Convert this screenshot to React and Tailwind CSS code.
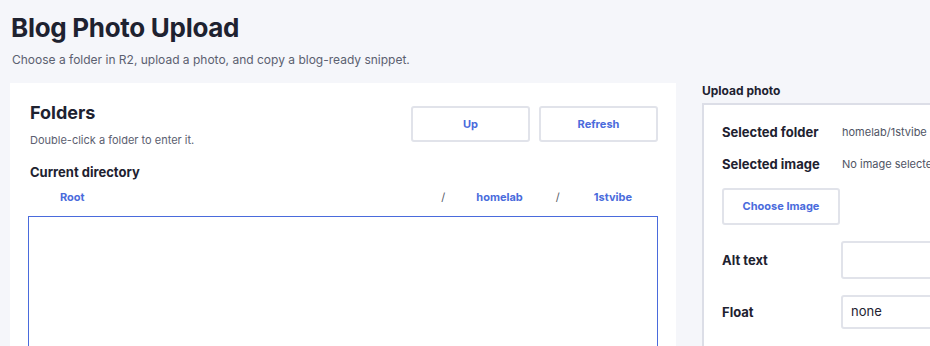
export default function App() {
  const font = { fontFamily: 'Inter, "Noto Sans", sans-serif' };
  return (
    <div className="h-[346px] w-full overflow-hidden bg-[#f5f6fa] text-[#1e2230]" style={font}>
      <div className="px-[10px] pt-[12px]">
        <h1 className="text-[26px] font-bold leading-[32px] tracking-[-0.3px] pl-[1px]">Blog Photo Upload</h1>
        <p className="mt-[8px] text-[12px] leading-[16px] text-[#5b6070] pl-[2px]">
          Choose a folder in R2, upload a photo, and copy a blog-ready snippet.
        </p>
        <div className="mt-[15px] flex items-start gap-[26px]">
          {/* Left card */}
          <div className="w-[666px] shrink-0 bg-white px-[18px] pt-[18px] h-[300px]">
            <div className="flex items-start justify-between">
              <div>
                <h2 className="text-[18px] font-bold leading-[24px] pl-[2px]">Folders</h2>
                <p className="mt-[7px] text-[11px] leading-[16px] text-[#5b6070] pl-[2px]">Double-click a folder to enter it.</p>
              </div>
              <div className="mt-[5px] flex gap-[9px]">
                <button className="h-[36px] w-[119px] rounded-[3px] border-2 border-[#e1e3ea] bg-white text-[11px] font-bold text-[#4a6bdc]">Up</button>
                <button className="h-[36px] w-[119px] rounded-[3px] border-2 border-[#e1e3ea] bg-white text-[11px] font-bold text-[#4a6bdc]">Refresh</button>
              </div>
            </div>
            <h3 className="mt-[16px] text-[13px] font-bold leading-[16px] pl-[2px]">Current directory</h3>
            <div className="mt-[9px] flex items-center text-[11px] leading-[16px] pr-[26px]">
              <span className="flex-1 pl-[32px] font-bold text-[#4a6bdc]">Root</span>
              <span className="text-[#555a66]">/</span>
              <span className="ml-[31px] font-bold text-[#4a6bdc]">homelab</span>
              <span className="ml-[33px] text-[#555a66]">/</span>
              <span className="ml-[34px] font-bold text-[#4a6bdc]">1stvibe</span>
            </div>
            <div className="mt-[11px] h-[200px] border border-[#4a6bdc] bg-white"></div>
          </div>
          {/* Right column */}
          <div className="w-[320px] shrink-0">
            <h2 className="text-[12px] font-bold leading-[16px]">Upload photo</h2>
            <div className="mt-[4px] h-[260px] border-l-2 border-t-2 border-[#dcdee7] bg-white pl-[18px] pt-[19px]">
              <div className="grid grid-cols-[120px_1fr] items-center gap-y-[16px]">
                <span className="text-[13px] font-bold leading-[16px]">Selected folder</span>
                <span className="whitespace-nowrap text-[11px] leading-[16px] text-[#4f5464]">homelab/1stvibe</span>
                <span className="text-[13px] font-bold leading-[16px]">Selected image</span>
                <span className="whitespace-nowrap text-[11px] leading-[16px] text-[#4f5464]">No image selected</span>
              </div>
              <button className="mt-[16px] h-[37px] w-[118px] rounded-[3px] border-2 border-[#e1e3ea] bg-white text-[11px] font-bold text-[#4a6bdc]">Choose Image</button>
              <div className="mt-[16px] grid grid-cols-[119px_1fr] items-center">
                <span className="text-[13px] font-bold leading-[16px]">Alt text</span>
                <div className="h-[38px] rounded-[3px] border-2 border-[#e1e3ea] bg-white"></div>
              </div>
              <div className="mt-[16px] grid grid-cols-[119px_1fr] items-center">
                <span className="text-[13px] font-bold leading-[16px]">Float</span>
                <div className="flex h-[34px] items-center rounded-[3px] border-2 border-[#e1e3ea] bg-white pl-[8px] text-[13px] text-[#1e2230]">none</div>
              </div>
            </div>
          </div>
        </div>
      </div>
    </div>
  );
}
